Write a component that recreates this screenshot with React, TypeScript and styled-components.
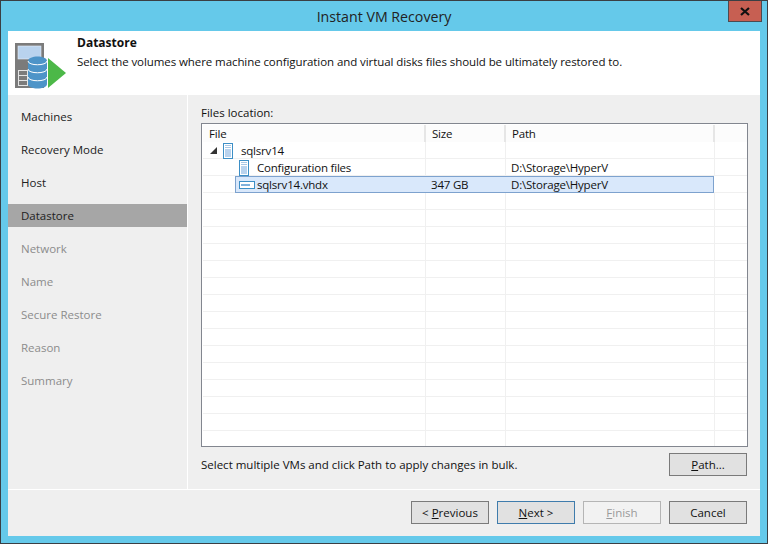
import React from "react";
import styled, { createGlobalStyle } from "styled-components";

const GlobalStyle = createGlobalStyle`
  html, body {
    margin: 0;
    padding: 0;
    background: #65c9ea;
  }
  * {
    box-sizing: border-box;
  }
`;

const Window = styled.div`
  width: 768px;
  height: 544px;
  display: flex;
  flex-direction: column;
  background: #65c9ea;
  border: 1px solid #3a3f44;
  padding: 0 7px 7px 7px;
  font-family: "Open Sans", "Noto Sans", sans-serif;
  font-size: 11.5px;
  color: #111;
  overflow: hidden;
`;

const TitleBar = styled.div`
  height: 30px;
  flex: none;
  position: relative;
  display: flex;
  align-items: center;
  justify-content: center;
  font-size: 14.2px;
  color: #222;
`;

const CloseButton = styled.div`
  position: absolute;
  right: -2px;
  top: -1px;
  width: 34px;
  height: 22px;
  background: #c75f52;
  border: 1px solid #4c4a50;
  display: flex;
  align-items: center;
  justify-content: center;
`;

const Header = styled.div`
  height: 64px;
  flex: none;
  background: #fff;
  display: flex;
  padding: 3px 0 0 7px;
  gap: 10px;
`;

const HeaderIcon = styled.svg`
  width: 52px;
  height: 46px;
  flex: none;
  margin-top: 9px;
`;

const HeaderText = styled.div`
  display: flex;
  flex-direction: column;
`;

const HeaderTitle = styled.div`
  font-weight: 700;
  font-size: 12px;
  line-height: 17px;
`;

const HeaderDesc = styled.div`
  line-height: 17px;
  margin-top: 2px;
  letter-spacing: -0.08px;
`;

const Middle = styled.div`
  flex: 1;
  min-height: 0;
  display: flex;
  background: #efefef;
  border-bottom: 1px solid #fff;
`;

const Sidebar = styled.nav`
  width: 180px;
  flex: none;
  border-right: 1px solid #fff;
  padding-top: 10px;
  display: flex;
  flex-direction: column;
  gap: 10px;
`;

const NavItem = styled.div<{ $active?: boolean; $disabled?: boolean }>`
  height: 23px;
  line-height: 24px;
  padding-left: 13px;
  background: ${(p) => (p.$active ? "#a6a6a6" : "transparent")};
  color: ${(p) => (p.$disabled ? "#8c8c8c" : "#222")};
`;

const Content = styled.div`
  flex: 1;
  min-width: 0;
  padding: 9px 12px 11px 13px;
  display: flex;
  flex-direction: column;
`;

const FieldLabel = styled.div`
  line-height: 18px;
  margin-bottom: 1px;
`;

const Table = styled.div`
  height: 324px;
  flex: none;
  background: #fff;
  border: 1px solid #82868f;
  padding: 1px 0 0 1px;
  overflow: hidden;
  letter-spacing: -0.2px;
`;

const Row = styled.div<{ $head?: boolean }>`
  display: grid;
  grid-template-columns: 223px 80px 209px 1fr;
  height: 17px;
  border-bottom: 1px solid ${(p) => (p.$head ? "#e3e3e3" : "#f0f0f0")};
`;

const HeadCell = styled.div<{ $last?: boolean }>`
  background: #fcfcfc;
  border-right: 2px solid ${(p) => (p.$last ? "transparent" : "#e6e6e6")};
  padding-left: 6px;
  line-height: 17px;
  white-space: nowrap;
`;

const Cell = styled.div<{ $indent?: number }>`
  display: flex;
  align-items: center;
  height: 17px;
  border-right: 1px solid #f0f0f0;
  padding-left: ${(p) => p.$indent ?? 5}px;
  white-space: nowrap;
`;

const SelectedRow = styled.div`
  display: grid;
  grid-template-columns: 32px 191px 80px 208px 1fr;
  height: 17px;
  border-bottom: 1px solid #f0f0f0;
`;

const Spacer = styled.div`
  border-right: 1px solid transparent;
`;

const SelectedBand = styled.div`
  grid-column: 2 / 5;
  display: grid;
  grid-template-columns: 190px 80px 1fr;
  height: 17px;
  background: #d9e8fb;
  border: 1px solid #7da2ce;
`;

const BandCell = styled.div`
  display: flex;
  align-items: center;
  padding-left: 3px;
  white-space: nowrap;
`;

const BandTextCell = styled(BandCell)`
  padding-left: 5px;
`;

const Expander = styled.svg`
  width: 7px;
  height: 7px;
  margin-right: 6px;
  flex: none;
`;

const DocIcon = styled.svg`
  width: 10px;
  height: 16px;
  flex: none;
  margin-right: 8px;
`;

const DiskIcon = styled.svg`
  width: 16px;
  height: 8px;
  flex: none;
  margin-right: 2px;
`;

const BulkRow = styled.div`
  display: flex;
  align-items: center;
  justify-content: space-between;
  margin-top: 6px;
  padding-right: 1px;
`;

const Button = styled.button<{ $default?: boolean }>`
  width: 78px;
  height: 23px;
  flex: none;
  padding: 0;
  background: #e1e1e1;
  border: 1px solid ${(p) => (p.$default ? "#3f7cac" : "#7a7a7a")};
  font: inherit;
  color: #111;
  &:disabled {
    background: #f2f2f2;
    border-color: #b5b5b5;
    color: #9a9a9a;
  }
`;

const Footer = styled.div`
  height: 46px;
  flex: none;
  background: #efefef;
  display: flex;
  justify-content: flex-end;
  align-items: flex-start;
  gap: 8px;
  padding: 11px 13px 0 0;
`;

const Key = styled.span`
  text-decoration: underline;
  text-underline-offset: 1px;
`;

const Doc = () => (
  <DocIcon viewBox="0 0 10 16">
    <rect x="0.5" y="0.5" width="9" height="15" fill="#fff" stroke="#3d8fc6" />
    <rect x="2" y="2" width="6" height="1" fill="#a9c8e6" />
    <rect x="2" y="4" width="6" height="1" fill="#a9c8e6" />
    <rect x="2" y="6" width="6" height="8" fill="#b9d3ee" />
  </DocIcon>
);

const Disk = () => (
  <DiskIcon viewBox="0 0 16 8">
    <rect x="0.5" y="0.5" width="15" height="7" fill="#fff" stroke="#3d8fc6" />
    <rect x="2" y="3" width="9" height="2" fill="#7fb1dc" />
  </DiskIcon>
);

const steps = [
  { name: "Machines" },
  { name: "Recovery Mode" },
  { name: "Host" },
  { name: "Datastore", active: true },
  { name: "Network", disabled: true },
  { name: "Name", disabled: true },
  { name: "Secure Restore", disabled: true },
  { name: "Reason", disabled: true },
  { name: "Summary", disabled: true },
];

const emptyRows = Array.from({ length: 16 }, (_, i) => i);

export default function App() {
  return (
    <Window>
      <GlobalStyle />
      <TitleBar>
        Instant VM Recovery
        <CloseButton>
          <svg width="10" height="9" viewBox="0 0 10 9">
            <path d="M1 1 L9 8 M9 1 L1 8" stroke="#111" strokeWidth="2.2" />
          </svg>
        </CloseButton>
      </TitleBar>
      <Header>
        <HeaderIcon viewBox="0 0 52 46">
          <rect x="0" y="0" width="29" height="45" fill="#7b7b7b" />
          <rect x="3" y="3" width="23" height="13" fill="#b9d3ee" stroke="#e6eef7" strokeWidth="0.6" />
          <rect x="3.5" y="27.5" width="9" height="5" fill="#7b7b7b" stroke="#e4e4e4" />
          <rect x="3.5" y="32.5" width="9" height="5" fill="#7b7b7b" stroke="#e4e4e4" />
          <rect x="3.5" y="37.5" width="9" height="5" fill="#7b7b7b" stroke="#e4e4e4" />
          <path d="M13 18 C13 12 32 12 32 18 V41 C32 47 13 47 13 41 Z" fill="#4d94c8" />
          <path d="M13 18 C13 23 32 23 32 18" fill="none" stroke="#fff" strokeWidth="1" />
          <path d="M13 26 C13 31 32 31 32 26" fill="none" stroke="#fff" strokeWidth="1" />
          <path d="M13 34 C13 39 32 39 32 34" fill="none" stroke="#fff" strokeWidth="1" />
          <path d="M33 15 L51 30 L33 45 Z" fill="#4cb848" />
        </HeaderIcon>
        <HeaderText>
          <HeaderTitle>Datastore</HeaderTitle>
          <HeaderDesc>
            Select the volumes where machine configuration and virtual disks files should be ultimately restored to.
          </HeaderDesc>
        </HeaderText>
      </Header>
      <Middle>
        <Sidebar>
          {steps.map((s) => (
            <NavItem key={s.name} $active={s.active} $disabled={s.disabled}>
              {s.name}
            </NavItem>
          ))}
        </Sidebar>
        <Content>
          <FieldLabel>Files location:</FieldLabel>
          <Table>
            <Row $head>
              <HeadCell>File</HeadCell>
              <HeadCell>Size</HeadCell>
              <HeadCell>Path</HeadCell>
              <HeadCell $last />
            </Row>
            <Row>
              <Cell $indent={7}>
                <Expander viewBox="0 0 7 7">
                  <path d="M7 0 V7 H0 Z" fill="#333" />
                </Expander>
                <Doc />
                sqlsrv14
              </Cell>
              <Cell />
              <Cell />
              <Spacer />
            </Row>
            <Row>
              <Cell $indent={36}>
                <Doc />
                Configuration files
              </Cell>
              <Cell />
              <Cell>D:\Storage\HyperV</Cell>
              <Spacer />
            </Row>
            <SelectedRow>
              <Spacer />
              <SelectedBand>
                <BandCell>
                  <Disk />
                  sqlsrv14.vhdx
                </BandCell>
                <BandTextCell>347 GB</BandTextCell>
                <BandTextCell>D:\Storage\HyperV</BandTextCell>
              </SelectedBand>
              <Spacer />
            </SelectedRow>
            {emptyRows.map((i) => (
              <Row key={i}>
                <Cell />
                <Cell />
                <Cell />
                <Spacer />
              </Row>
            ))}
          </Table>
          <BulkRow>
            <span>Select multiple VMs and click Path to apply changes in bulk.</span>
            <Button>
              <Key>P</Key>ath...
            </Button>
          </BulkRow>
        </Content>
      </Middle>
      <Footer>
        <Button>
          &lt; <Key>P</Key>revious
        </Button>
        <Button $default>
          <Key>N</Key>ext &gt;
        </Button>
        <Button disabled>
          <Key>F</Key>inish
        </Button>
        <Button>Cancel</Button>
      </Footer>
    </Window>
  );
}
